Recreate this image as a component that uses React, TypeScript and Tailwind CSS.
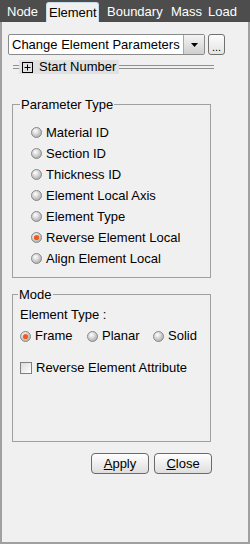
import React from "react";

const font = { fontFamily: '"Liberation Sans", Arial, sans-serif' };

function Radio({ checked }: { checked?: boolean }) {
  return (
    <svg width="11" height="11" viewBox="0 0 11 11" className="shrink-0">
      <defs>
        <radialGradient id={checked ? "rg-on" : "rg-off"} cx="40%" cy="35%" r="70%">
          <stop offset="0%" stopColor="#ffffff" />
          <stop offset="100%" stopColor="#a8a8a8" />
        </radialGradient>
      </defs>
      <circle cx="5.5" cy="5.5" r="5" fill={checked ? "url(#rg-on)" : "url(#rg-off)"} stroke="#8a8a8a" strokeWidth="1" />
      {checked && <circle cx="5.5" cy="5.5" r="2.6" fill="#f05a1e" />}
    </svg>
  );
}

function RadioItem({ label, checked }: { label: string; checked?: boolean }) {
  return (
    <div className="flex items-center gap-[4px] h-[21px]">
      <Radio checked={checked} />
      <span>{label}</span>
    </div>
  );
}

export default function App() {
  const params = [
    "Material ID",
    "Section ID",
    "Thickness ID",
    "Element Local Axis",
    "Element Type",
    "Reverse Element Local",
    "Align Element Local",
  ];

  return (
    <div className="w-[250px] h-[544px] bg-[#4d4d4d] flex flex-col text-[13px] text-black" style={font}>
      {/* Tabs */}
      <div className="h-[22px] flex items-end pl-[7px] text-white shrink-0 whitespace-nowrap">
        <div className="h-[20px] w-[39px] flex items-center">Node</div>
        <div className="h-[20px] w-[53px] pl-[2px] bg-[#f0f0f0] text-black border border-b-0 border-[#c8dbe8] rounded-t-[3px] flex items-center">
          Element
        </div>
        <div className="h-[20px] w-[64px] ml-[8px] flex items-center">Boundary</div>
        <div className="h-[20px] w-[37px] flex items-center">Mass</div>
        <div className="h-[20px] flex items-center">Load</div>
      </div>

      {/* Panel */}
      <div className="flex-1 bg-[#f0f0f0] border-l-2 border-r-2 border-b-2 border-[#a0a0a0] pt-[12px] flex flex-col">
        {/* Dropdown row */}
        <div className="flex items-center gap-[3px] pl-[6px]">
          <div className="w-[197px] h-[21px] bg-white border border-[#8a8a8a] rounded-[2px] flex items-center">
            <span className="flex-1 pl-[3px] whitespace-nowrap">Change Element Parameters</span>
            <div className="w-[21px] h-[19px] border-l border-[#a8a8a8] bg-gradient-to-b from-[#f4f4f4] to-[#cfcfcf] flex items-center justify-center">
              <svg width="7" height="4" viewBox="0 0 7 4">
                <path d="M0 0 H7 L3.5 4 Z" fill="#000" />
              </svg>
            </div>
          </div>
          <div className="w-[17px] h-[21px] border border-[#707070] rounded-[3px] bg-gradient-to-b from-[#fcfcfc] to-[#e4e4e4] flex items-end justify-center leading-[14px] text-[11px]">
            ...
          </div>
        </div>

        {/* Start Number */}
        <div className="flex items-center mt-[5px] pl-[11px] h-[14px]">
          <div className="w-[6px] flex flex-col gap-[2px]">
            <div className="h-px bg-[#909090]" />
            <div className="h-px bg-[#909090]" />
          </div>
          <div className="flex items-center bg-[#e1e1e1] h-[14px] pl-[3px] pr-[3px]">
            <svg width="11" height="11" viewBox="0 0 11 11" className="mr-[6px]">
              <rect x="0.5" y="0.5" width="10" height="10" fill="none" stroke="#000" />
              <path d="M5.5 2.5 V8.5 M2.5 5.5 H8.5" stroke="#000" />
            </svg>
            <span className="leading-[14px]">Start Number</span>
          </div>
          <div className="w-[95px] flex flex-col gap-[2px]">
            <div className="h-px bg-[#909090]" />
            <div className="h-px bg-[#909090]" />
          </div>
        </div>

        {/* Parameter Type */}
        <fieldset className="ml-[10px] w-[199px] mt-[24px] border border-[#a0a0a0] pl-[18px] pt-[11px] pb-[8px] h-[180px]">
          <legend className="px-[1px] ml-[-11px] leading-[13px]">Parameter Type</legend>
          {params.map((p) => (
            <RadioItem key={p} label={p} checked={p === "Reverse Element Local"} />
          ))}
        </fieldset>

        {/* Mode */}
        <fieldset className="ml-[10px] w-[199px] mt-[10px] border border-[#a0a0a0] pl-[7px] pt-[4px] h-[154px]">
          <legend className="px-[1px] ml-[-2px] leading-[13px]">Mode</legend>
          <div className="h-[20px] flex items-center">Element Type :</div>
          <div className="flex items-center h-[22px]">
            <div className="flex items-center gap-[4px] w-[67px]">
              <Radio checked />
              <span>Frame</span>
            </div>
            <div className="flex items-center gap-[4px] w-[66px]">
              <Radio />
              <span>Planar</span>
            </div>
            <div className="flex items-center gap-[4px]">
              <Radio />
              <span>Solid</span>
            </div>
          </div>
          <div className="flex items-center gap-[4px] mt-[11px]">
            <div className="w-[12px] h-[12px] border border-[#7f7f7f] bg-gradient-to-br from-[#dcdcdc] to-white" />
            <span>Reverse Element Attribute</span>
          </div>
        </fieldset>

        {/* Buttons */}
        <div className="flex justify-end gap-[5px] mt-[11px] w-[210px]">
          <button className="w-[58px] h-[21px] border border-[#6a6a6a] rounded-[4px] bg-gradient-to-b from-white to-[#dedede] text-[13px] leading-none">
            <u>A</u>pply
          </button>
          <button className="w-[58px] h-[21px] border border-[#6a6a6a] rounded-[4px] bg-gradient-to-b from-white to-[#dedede] text-[13px] leading-none">
            <u>C</u>lose
          </button>
        </div>
      </div>
    </div>
  );
}
